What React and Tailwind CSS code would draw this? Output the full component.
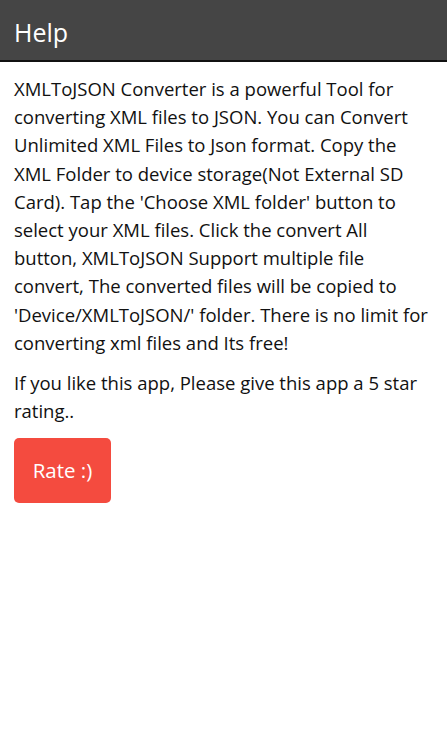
export default function App() {
  return (
    <div className="min-h-[746px] bg-white" style={{ fontFamily: '"Open Sans", "Noto Sans", sans-serif' }}>
      <header className="h-[62px] bg-[#454545] border-b-2 border-[#111111] flex items-center px-[14px] pt-[4px]">
        <h1 className="text-[25px] text-white leading-none">Help</h1>
      </header>

      <main className="px-[14px] pt-[13px] text-[#111111] text-[18.5px] leading-[28.2px]">
        <p>
          XMLToJSON Converter is a powerful Tool for converting XML files to JSON. You can Convert Unlimited XML
          Files to Json format. Copy the XML Folder to device storage(Not External SD Card). Tap the 'Choose XML
          folder' button to select your XML files. Click the convert All button, XMLToJSON Support multiple file
          convert, The converted files will be copied to 'Device/XMLToJSON/' folder. There is no limit for
          converting xml files and Its free!
        </p>
        <p className="mt-[12px]">If you like this app, Please give this app a 5 star rating..</p>
        <button className="mt-[12.5px] w-[97px] h-[65px] rounded-[5px] bg-[#f44b3f] text-white text-[20.5px]">
          Rate :)
        </button>
      </main>
    </div>
  );
}
